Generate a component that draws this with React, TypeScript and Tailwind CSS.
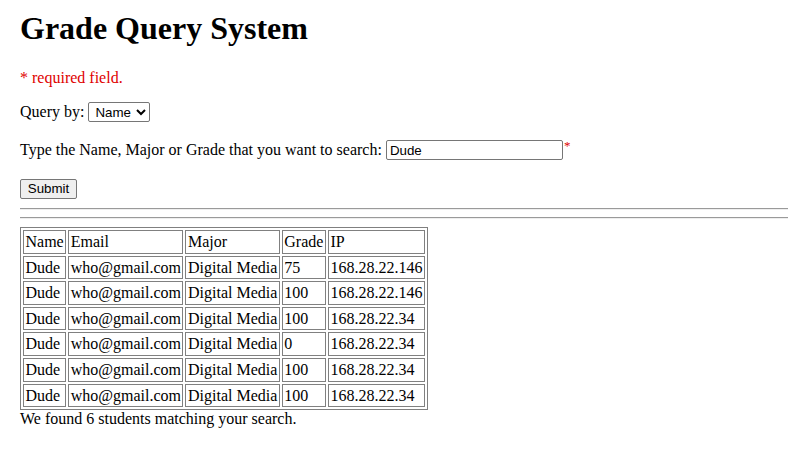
import React from "react";

const rows = [
  { name: "Dude", email: "who@gmail.com", major: "Digital Media", grade: "75", ip: "168.28.22.146" },
  { name: "Dude", email: "who@gmail.com", major: "Digital Media", grade: "100", ip: "168.28.22.146" },
  { name: "Dude", email: "who@gmail.com", major: "Digital Media", grade: "100", ip: "168.28.22.34" },
  { name: "Dude", email: "who@gmail.com", major: "Digital Media", grade: "0", ip: "168.28.22.34" },
  { name: "Dude", email: "who@gmail.com", major: "Digital Media", grade: "100", ip: "168.28.22.34" },
  { name: "Dude", email: "who@gmail.com", major: "Digital Media", grade: "100", ip: "168.28.22.34" },
];

const cell = "border border-[#808080] px-[1.5px] py-px leading-[19.6px] text-left font-normal whitespace-nowrap";

const App = () => {
  return (
    <div className="min-h-[460px] bg-white pl-5 pt-[10px] font-['Liberation_Serif','Times_New_Roman',serif] text-base text-black">
      <h1 className="m-0 text-[32px] font-bold leading-[37px]">Grade Query System</h1>

      <p className="mt-[22px] leading-[18px] text-[#e00000]">* required field.</p>

      <div className="mt-[14px] flex h-[22px] items-center">
        <span>Query by:&nbsp;</span>
        <select
          defaultValue="Name"
          className="h-5 w-[62px] rounded-[2px] border border-[#767676] bg-white pl-[2px] font-['Liberation_Sans',Arial,sans-serif] text-[13.33px] text-black"
        >
          <option>Name</option>
          <option>Major</option>
          <option>Grade</option>
        </select>
      </div>

      <div className="mt-4 flex h-[22px] items-center">
        <span>Type the Name, Major or Grade that you want to search:&nbsp;</span>
        <input
          type="text"
          defaultValue="Dude"
          className="h-5 w-[177px] rounded-[2px] border border-[#767676] bg-white px-[3px] font-['Liberation_Sans',Arial,sans-serif] text-[13.33px] text-black"
        />
        <span className="-mt-2 ml-px text-[13px] text-[#e00000]">*</span>
      </div>

      <button className="mt-[18px] flex h-5 w-[57px] items-center justify-center rounded-[2px] border border-[#767676] bg-[#efefef] font-['Liberation_Sans',Arial,sans-serif] text-[13.33px] text-black">
        Submit
      </button>

      <hr className="mt-[9px] h-[2px] border-0 border-t border-b border-t-[#9a9a9a] border-b-[#eeeeee]" />
      <hr className="mt-[7px] h-[2px] border-0 border-t border-b border-t-[#9a9a9a] border-b-[#eeeeee]" />

      <table className="mt-[8px] border-separate border-spacing-[2px] border border-[#808080]">
        <thead>
          <tr>
            <th className={cell}>Name</th>
            <th className={cell}>Email</th>
            <th className={cell}>Major</th>
            <th className={cell}>Grade</th>
            <th className={cell}>IP</th>
          </tr>
        </thead>
        <tbody>
          {rows.map((r, i) => (
            <tr key={i}>
              <td className={cell}>{r.name}</td>
              <td className={cell}>{r.email}</td>
              <td className={cell}>{r.major}</td>
              <td className={cell}>{r.grade}</td>
              <td className={cell}>{r.ip}</td>
            </tr>
          ))}
        </tbody>
      </table>

      <p className="leading-[18px]">We found 6 students matching your search.</p>
    </div>
  );
};

export default App;
